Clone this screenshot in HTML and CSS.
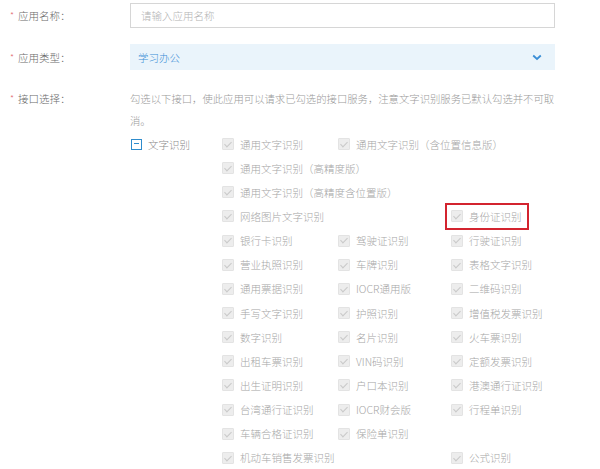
FILE: index.html
```html
<!DOCTYPE html>
<html lang="zh">
<head>
<meta charset="utf-8">
<link rel="stylesheet" href="styles.css">
</head>
<body>
<div class="form">
  <div class="row row-name">
    <div class="label"><span class="star">*</span>应用名称：</div>
    <div class="input">请输入应用名称</div>
  </div>
  <div class="row row-type">
    <div class="label"><span class="star">*</span>应用类型：</div>
    <div class="select">
      <span>学习办公</span>
      <svg class="chev" width="10" height="7" viewBox="0 0 10 7"><polyline points="1.2,1.5 5,5 8.8,1.5" fill="none" stroke="#3a8ed6" stroke-width="1.8"/></svg>
    </div>
  </div>
  <div class="row row-api">
    <div class="label"><span class="star">*</span>接口选择：</div>
    <div class="api">
      <p class="desc">勾选以下接口，使此应用可以请求已勾选的接口服务，注意文字识别服务已默认勾选并不可取消。</p>
      <div class="group">
        <div class="group-head">
          <span class="minus"></span><span class="group-name">文字识别</span>
        </div>
        <div class="grid">
          <span class="item"><i class="cb"></i>通用文字识别</span>
          <span class="item span2"><i class="cb"></i>通用文字识别（含位置信息版）</span>
          <span class="item full"><i class="cb"></i>通用文字识别（高精度版）</span>
          <span class="item full"><i class="cb"></i>通用文字识别（高精度含位置版）</span>
          <span class="item span2"><i class="cb"></i>网络图片文字识别</span>
          <span class="item"><span class="mark"><i class="cb"></i>身份证识别</span></span>
          <span class="item"><i class="cb"></i>银行卡识别</span>
          <span class="item"><i class="cb"></i>驾驶证识别</span>
          <span class="item"><i class="cb"></i>行驶证识别</span>
          <span class="item"><i class="cb"></i>营业执照识别</span>
          <span class="item"><i class="cb"></i>车牌识别</span>
          <span class="item"><i class="cb"></i>表格文字识别</span>
          <span class="item"><i class="cb"></i>通用票据识别</span>
          <span class="item"><i class="cb"></i>IOCR通用版</span>
          <span class="item"><i class="cb"></i>二维码识别</span>
          <span class="item"><i class="cb"></i>手写文字识别</span>
          <span class="item"><i class="cb"></i>护照识别</span>
          <span class="item"><i class="cb"></i>增值税发票识别</span>
          <span class="item"><i class="cb"></i>数字识别</span>
          <span class="item"><i class="cb"></i>名片识别</span>
          <span class="item"><i class="cb"></i>火车票识别</span>
          <span class="item"><i class="cb"></i>出租车票识别</span>
          <span class="item"><i class="cb"></i>VIN码识别</span>
          <span class="item"><i class="cb"></i>定额发票识别</span>
          <span class="item"><i class="cb"></i>出生证明识别</span>
          <span class="item"><i class="cb"></i>户口本识别</span>
          <span class="item"><i class="cb"></i>港澳通行证识别</span>
          <span class="item"><i class="cb"></i>台湾通行证识别</span>
          <span class="item"><i class="cb"></i>IOCR财会版</span>
          <span class="item"><i class="cb"></i>行程单识别</span>
          <span class="item"><i class="cb"></i>车辆合格证识别</span>
          <span class="item span2"><i class="cb"></i>保险单识别</span>
          <span class="item span2"><i class="cb"></i>机动车销售发票识别</span>
          <span class="item"><i class="cb"></i>公式识别</span>
        </div>
      </div>
    </div>
  </div>
</div>
</body>
</html>
```

FILE: styles.css
```css
* { box-sizing: border-box; }
html, body { margin: 0; background: #fff; }
body {
  font-family: "Noto Sans CJK SC", "Noto Sans", sans-serif;
  font-weight: 300;
  font-size: 10.5px;
  color: #666;
  width: 600px;
  height: 469px;
  overflow: hidden;
}
.form { padding-top: 3px; }
.row { display: flex; }
.label {
  width: 130px;
  flex: none;
  padding-left: 10px;
  color: #6a6a6a;
}
.star {
  color: #e36a72;
  margin-right: 4px;
  font-size: 9px;
  position: relative;
  top: -1px;
}
.row-name { height: 25px; align-items: center; margin-bottom: 16px; }
.input {
  width: 425px;
  height: 25px;
  border: 1px solid #d6d6d6;
  padding-left: 10px;
  line-height: 23px;
  color: #b4b4b4;
}
.row-type { height: 26px; align-items: center; margin-bottom: 18px; }
.select {
  width: 425px;
  height: 26px;
  background: #eaf4fb;
  display: flex;
  align-items: center;
  justify-content: space-between;
  padding: 0 13px 0 8px;
  color: #3a8ed6;
}
.chev { display: block; }
.row-api .label { line-height: 22px; }
.api { width: 428px; }
.desc {
  margin: 0;
  line-height: 22px;
  color: #9a9a9a;
  font-size: 10.35px;
}
.group { display: flex; }
.group-head {
  width: 92px;
  flex: none;
  height: 24px;
  display: flex;
  align-items: center;
  padding-left: 1px;
}
.minus {
  width: 11px;
  height: 11px;
  border: 1.4px solid #2f8ccc;
  position: relative;
  margin-right: 6px;
}
.minus::after {
  content: "";
  position: absolute;
  left: 2px;
  right: 2px;
  top: 3.4px;
  height: 1.4px;
  background: #2f8ccc;
}
.group-name { color: #8a8a8a; }
.grid {
  display: grid;
  grid-template-columns: 116px 113px auto;
  grid-auto-rows: 24.15px;
  color: #a6a6a6;
}
.item {
  display: flex;
  align-items: center;
  white-space: nowrap;
}
.span2 { grid-column: span 2; }
.full { grid-column: 1 / -1; }
.cb {
  width: 12px;
  height: 12px;
  flex: none;
  background: #ededed;
  border: 1px solid #e3e3e3;
  border-radius: 1px;
  margin-right: 6px;
  position: relative;
}
.cb::after {
  content: "";
  position: absolute;
  left: 3.2px;
  top: 0.8px;
  width: 3px;
  height: 6px;
  border-right: 1.5px solid #c9c9c9;
  border-bottom: 1.5px solid #c9c9c9;
  transform: rotate(45deg);
}
.mark {
  display: flex;
  align-items: center;
  outline: 2.5px solid #d3242f;
  outline-offset: 4px;
  padding-right: 1px;
}
```
